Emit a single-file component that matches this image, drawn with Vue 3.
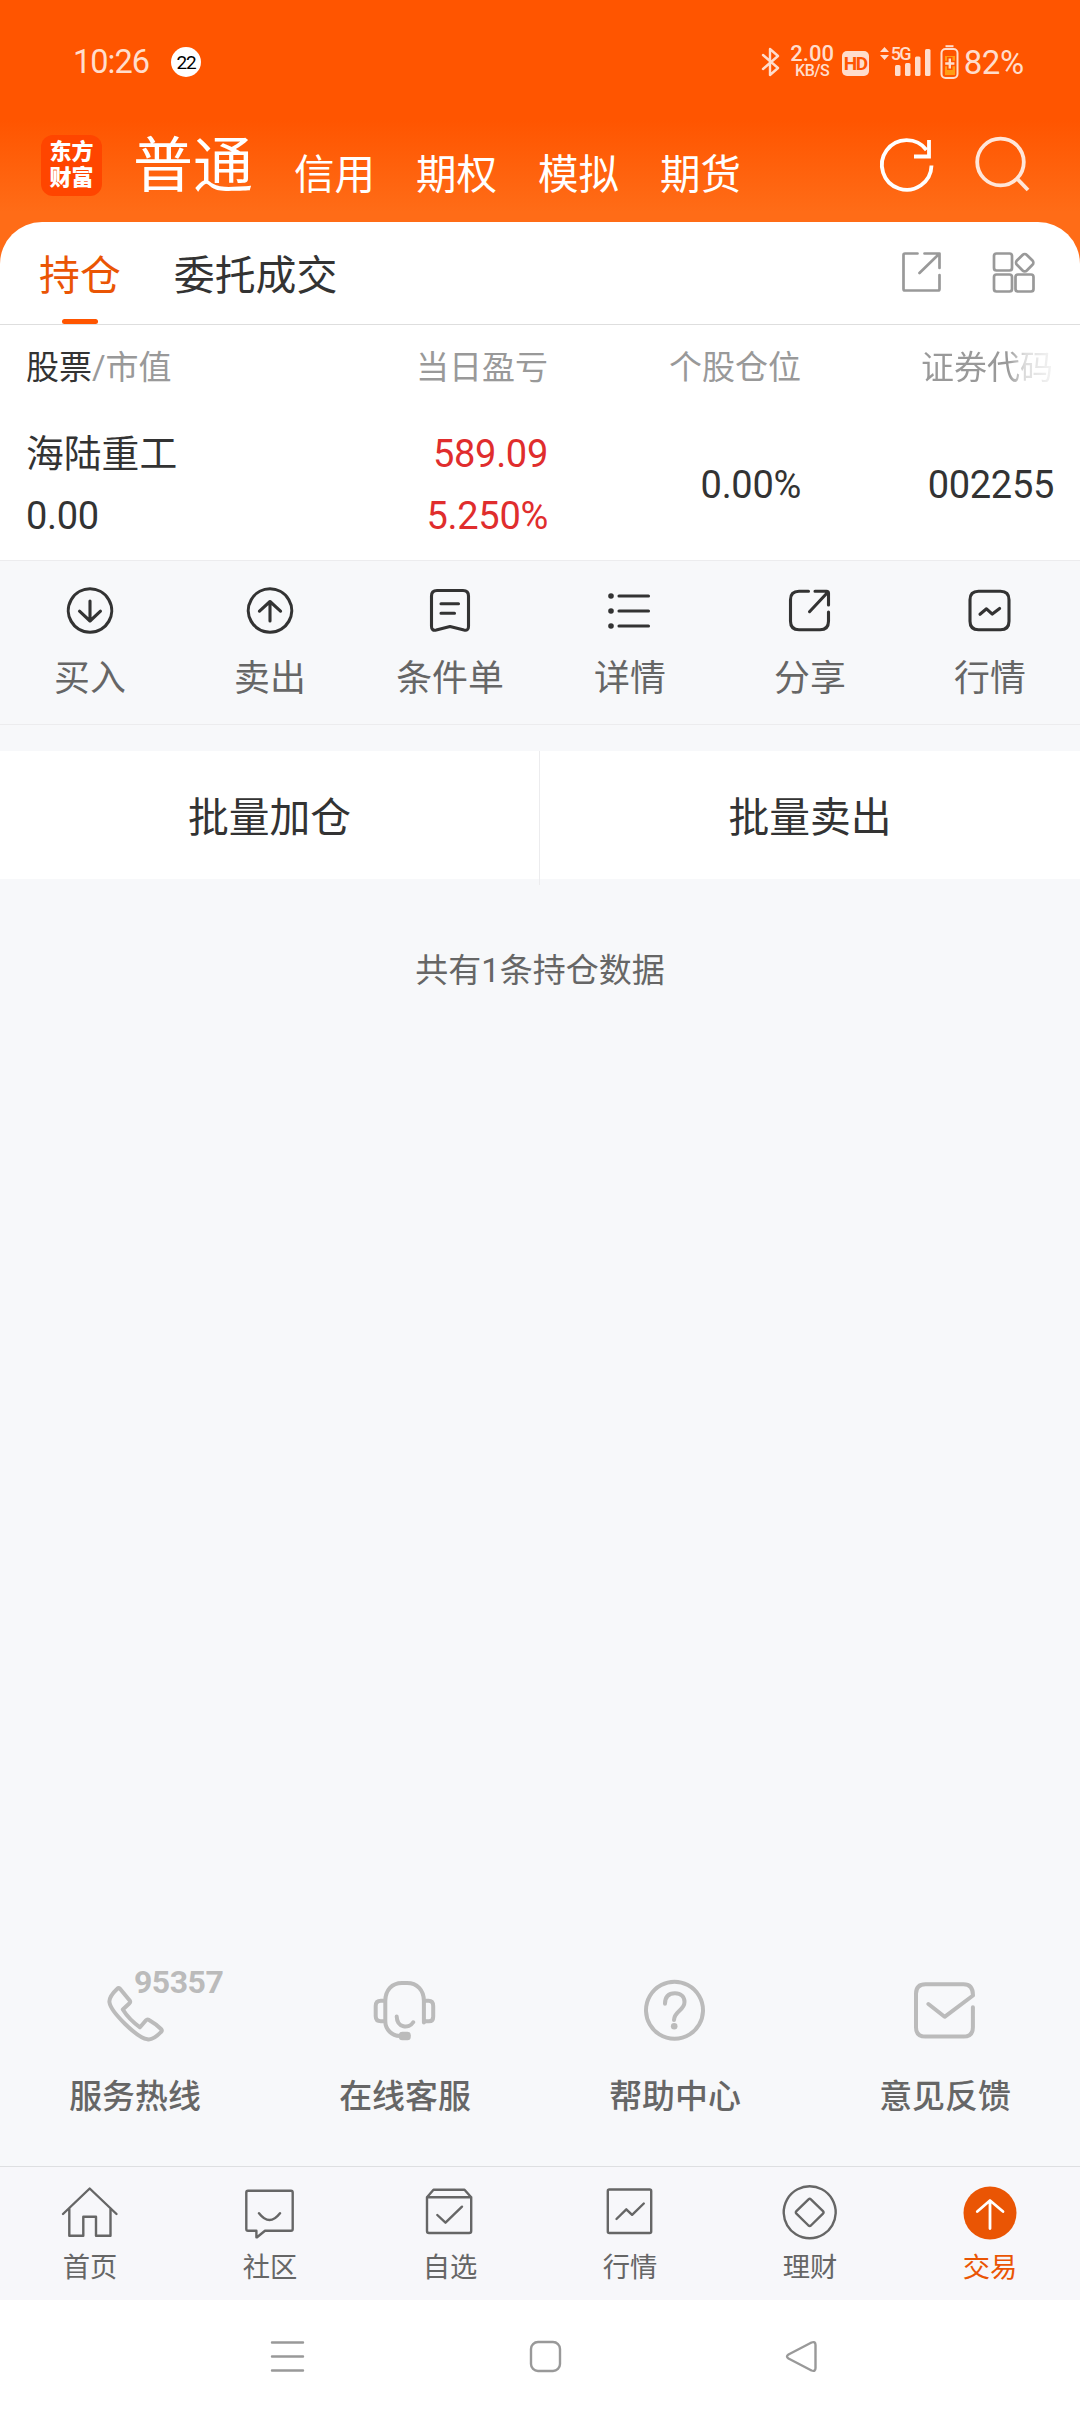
<script setup>
import { ref } from "vue";

const accounts = ["信用", "期权", "模拟", "期货"];

const actions = [
  {
    label: "买入",
    d: "M30 21v20M19.5 31.2L30 41 40.5 31.2M30 8.8a21.7 21.7 0 1 0 .01 0z",
  },
  {
    label: "卖出",
    d: "M30 41V22M19.5 31.2L30 21.5 40.5 31.2M30 8.8a21.7 21.7 0 1 0 .01 0z",
  },
  {
    label: "条件单",
    d: "M17 10.5h26q5.5 0 5.5 5.5v30.5q0 4.5-4.5 3.5L30 46.5 16.3 50q-4.8 1-4.8-3.5V16q0-5.5 5.5-5.5zM21 23.7h17.5M21 33.3h13.5",
  },
  {
    label: "详情",
    d: "M19 16h29.5M19 31h29.5M19 46h29.5",
    dots: [16, 31, 46],
  },
  {
    label: "分享",
    d: "M28.5 11.3H19q-8.5 0-8.5 8.5v21.5q0 8.5 8.5 8.5h21q8.500 0 8.500-8.500V32M35 11.300h11.500q2 0 2 2V25M29.500 31.700L48 12",
  },
  {
    label: "行情",
    d: "M18.500 11.200h22q8.500 0 8.500 8.500v21.500q0 8.500-8.500 8.500h-22q-8.500 0-8.500-8.500V19.700q0-8.500 8.500-8.500zM20 34.300l6.500-5.500 5.800 5.300 7.300-5.600",
  },
];

const services = [
  {
    label: "服务热线",
    tag: "95357",
    d: "M25 18.700L34.700 30.500q1 1.400-.2 2.700L27.800 39.500Q34 49.500 45 57.300L51 50.300q1.300-1.500 3-.3Q61 54 66 59q1.500 1.500 0 3Q58 70.500 52.500 69.300C42 68 16 42 14.500 32.500Q13.500 27 22.300 18.700q1.300-1.300 2.700 0z",
  },
  {
    label: "在线客服",
    d: "M20.300 30.700H16q-5.300 0-5.300 5.300v10.300q0 5 5.300 5h4.300M58.900 51.300h5q4.300 0 4.300-4.600V36q0-5.300-4.800-5.300h-4.500M58.900 52.500V31C58.900 20 52 13 42 13h-5C27 13 20.300 20 20.300 31v20C20.300 60 27 65.500 35 66M31.700 46.500C32 58 44 59 48.200 52.300",
    mic: true,
  },
  {
    label: "帮助中心",
    d: "M39.500 11.800a28.500 28.500 0 1 0 .01 0zM30 33.800C30 26 34 23.300 40 23.300S49.500 27 49.500 32C49.500 40.500 39.300 41 39 50",
    dot: true,
  },
  {
    label: "意见反馈",
    d: "M23.400 34l16.200 12.800L68 25.500Q68 14.300 58.500 14.300h-38q-9.500 0-9.500 9.500v33.500q0 9.300 9.500 9.300h38q9.400 0 9.400-9.300v-20",
  },
];

const tabs = [
  {
    label: "首页",
    d: "M3 34L29.700 8.500 56.500 34M9.300 28.500v27.200h14V36.700H36v19h14.500V28.500",
  },
  {
    label: "社区",
    d: "M8 10.700h43q1.700 0 1.700 1.700V49q0 1.700-1.700 1.700H25l-8 6.500h-.6v-6.500H8q-1.700 0-1.700-1.700V12.400q0-1.700 1.700-1.700zM19 33.300q10.500 13.500 21 0",
  },
  {
    label: "自选",
    d: "M7 17.300h44.200M13.500 9.800h31L51.200 17.300V51q0 2-2 2H9q-2 0-2-2V17.300zM17.300 35l8.200 7.700 16.500-16",
  },
  {
    label: "行情",
    d: "M9.300 9.500h40.400q1.500 0 1.500 1.500v40.500q0 1.500-1.500 1.500H9.300q-1.500 0-1.500-1.500V11q0-1.500 1.500-1.500zM16.500 39L26.300 29.300l5.800 5.500L43.800 23.500",
  },
  {
    label: "理财",
    d: "M29.700 6.300a26 26 0 1 0 .01 0zM28.500 19.300q1.200-1 2.400 0L43 31.200q1.200 1.200 0 2.400L30.900 45.500q-1.200 1-2.400 0L16.400 33.600q-1.200-1.200 0-2.400z",
  },
  { label: "交易", d: "M30 48.500V21M17.300 31.500L30 20.500 43 31.500" },
];

const current = ref(5);
</script>

<template>
  <div class="page">
    <header class="head">
      <div class="status">
        <span class="time">10:26</span>
        <span class="badge">22</span>
        <div class="status__right">
          <svg class="bt" width="20" height="32" viewBox="0 0 20 32">
            <path d="M2 9l15 13-8 7V3l8 7L2 23" />
          </svg>
          <div class="speed">
            <span>2.00</span>
            <span class="unit">KB/S</span>
          </div>
          <span class="hd">HD</span>
          <div class="signal">
            <svg width="52" height="32" viewBox="0 0 52 32">
              <path d="M0 6l4.500-5L9 6zM0 9l4.500 5L9 9z" />
              <rect x="15" y="19" width="5.500" height="11" rx="1.500" />
              <rect x="25" y="17" width="5.500" height="13" rx="1.500" />
              <rect x="35" y="10.500" width="5.500" height="19.500" rx="1.500" />
              <rect x="45" y="3" width="5.500" height="27" rx="1.500" />
            </svg>
            <span class="net">5G</span>
          </div>
          <svg class="battery" width="20" height="34" viewBox="0 0 20 34">
            <path d="M5.500 1.200h8" stroke="#ffddcc" stroke-width="2" />
            <rect x="5" y="11" width="10" height="19" fill="#ff9d14" />
            <rect
              x="1.500"
              y="4"
              width="16"
              height="29"
              rx="4"
              fill="none"
              stroke="#ffddcc"
              stroke-width="2"
            />
            <path d="M9.800 12v13M4.500 18.500h10.600" stroke="#f50" stroke-width="5.500" />
            <path d="M9.800 13.500v10M5.200 18.500h9.200" stroke="#ffddcc" stroke-width="2.400" />
          </svg>
          <span class="percent">82%</span>
        </div>
      </div>
      <div class="nav">
        <div class="logo"><span>东方</span><span>财富</span></div>
        <span class="nav__main">普通</span>
        <span v-for="name in accounts" :key="name" class="nav__item">{{ name }}</span>
        <svg class="nav__icons" width="160" height="70" viewBox="0 0 160 70">
          <path d="M60.500 35.500A24.800 24.800 0 1 1 55.500 20" />
          <path d="M58 10v16.500H43" />
          <g class="search">
            <circle cx="129.500" cy="32" r="23.300" />
            <path d="M146 48.500l11 11.500" />
          </g>
        </svg>
      </div>
    </header>

    <section class="panel">
      <div class="switch">
        <span class="switch__item switch__item--on">持仓</span>
        <span class="switch__item">委托成交</span>
        <svg class="switch__icons" width="140" height="50" viewBox="0 0 140 50">
          <path d="M18.500 9.500H6q-1.500 0-1.500 1.500v34q0 1.500 1.500 1.500h33q1.500 0 1.500-1.500V31" />
          <path d="M25.500 9.500h15V24M20.500 29L40 10" />
          <rect x="95" y="9.500" width="18" height="17" rx="2.500" />
          <rect x="95" y="30.500" width="18" height="17" rx="2.500" />
          <rect x="116.500" y="30.500" width="18" height="17" rx="2.500" />
          <rect x="118.700" y="11.700" width="14" height="14" rx="3" transform="rotate(45 125.700 18.700)" />
        </svg>
      </div>
      <div class="row row--head">
        <span class="name"><b>股票</b>/市值</span>
        <span>当日盈亏</span>
        <span>个股仓位</span>
        <span class="fade">证券代码</span>
      </div>
      <div class="row row--data">
        <div class="pair name">
          <span>海陆重工</span>
          <span class="num">0.00</span>
        </div>
        <div class="pair red num">
          <span>589.09</span>
          <span>5.250%</span>
        </div>
        <span class="num">0.00%</span>
        <span class="num">002255</span>
      </div>
    </section>

    <section class="actions">
      <div v-for="item in actions" :key="item.label" class="actions__item">
        <svg width="60" height="60" viewBox="0 0 60 60">
          <path :d="item.d" />
          <circle v-for="y in item.dots" :key="y" cx="11" :cy="y" r="2.800" />
        </svg>
        <span>{{ item.label }}</span>
      </div>
    </section>

    <section class="batch">
      <div class="batch__btn">批量加仓</div>
      <div class="batch__btn">批量卖出</div>
    </section>

    <p class="total">共有1条持仓数据</p>

    <section class="services">
      <div v-for="item in services" :key="item.label" class="services__item">
        <svg width="80" height="80" viewBox="0 0 80 80">
          <path :d="item.d" />
          <rect v-if="item.mic" class="solid" x="33.800" y="61.700" width="12" height="8.600" rx="3.500" />
          <circle v-if="item.dot" class="solid" cx="39.200" cy="56.300" r="3.300" />
        </svg>
        <span v-if="item.tag" class="tag">{{ item.tag }}</span>
        <span>{{ item.label }}</span>
      </div>
    </section>

    <nav class="tabbar">
      <div
        v-for="(item, i) in tabs"
        :key="item.label"
        class="tabbar__item"
        :class="{ on: current === i }"
        @click="current = i"
      >
        <svg width="60" height="60" viewBox="0 0 60 60">
          <circle v-if="current === i" cx="30" cy="33" r="26.500" />
          <path :d="item.d" />
        </svg>
        <span>{{ item.label }}</span>
      </div>
    </nav>

    <div class="system">
      <svg width="1080" height="112" viewBox="0 0 1080 112">
        <path d="M272 42.500h31M272 56.500h31M272 70.500h31" />
        <rect x="531" y="42" width="29" height="29" rx="7" />
        <path d="M788.500 54.500L811.500 42.500q4-1.500 4 2.500v23q0 4-4 2.500l-23-12q-3-2 0-4z" />
      </svg>
    </div>
  </div>
</template>

<style>
body {
  margin: 0;
}
</style>

<style scoped>
.page {
  width: 1080px;
  height: 2412px;
  display: flex;
  flex-direction: column;
  overflow: hidden;

  font-family: Roboto, "Noto Sans CJK SC", sans-serif;
  color: #333;
  background-color: #f7f8fa;
}

svg {
  display: block;
  flex: none;
  fill: none;
  stroke-linecap: round;
  stroke-linejoin: round;
}

.head {
  height: 272px;
  flex: none;
  background: linear-gradient(#ff5500 120px, #ff6c17 212px);
}

.status {
  height: 124px;
  padding: 0 56px 0 73px;
  box-sizing: border-box;
  display: flex;
  align-items: center;
  color: #ffddcc;
}

.time {
  width: 98px;
  font-size: 32.5px;
  letter-spacing: -1px;
}

.badge {
  width: 30px;
  height: 30px;
  border-radius: 50%;
  font-size: 19px;
  line-height: 31px;
  letter-spacing: -1.2px;
  text-align: center;
  color: #000;
  background-color: #fff;
}

.status__right {
  margin-left: auto;
  display: flex;
  align-items: center;
}

.bt {
  margin-right: 10px;
  stroke: #ffddcc;
  stroke-width: 2.4;
}

.speed {
  width: 43px;
  margin-right: 8px;
  display: flex;
  flex-direction: column;
  align-items: center;
  font-size: 22px;
  line-height: 17px;
  font-weight: 500;
}

.unit {
  font-size: 16px;
  line-height: 18px;
  letter-spacing: -0.5px;
}

.hd {
  width: 27px;
  height: 25px;
  margin: 2px 11px 0 0;
  border-radius: 5px;
  font-size: 19px;
  line-height: 26px;
  font-weight: 700;
  letter-spacing: -1.5px;
  text-align: center;
  color: #ff5500;
  background-color: #ffddcc;
}

.signal {
  position: relative;
  margin-right: 8px;
}

.signal svg {
  fill: #ffddcc;
}

.net {
  position: absolute;
  left: 11px;
  top: -1px;
  font-size: 18px;
  line-height: 18px;
  font-weight: 500;
  letter-spacing: -1.5px;
}

.battery {
  margin-right: 4px;
  stroke-linecap: butt;
}

.percent {
  margin-top: 1px;
  font-size: 33px;
  letter-spacing: -0.3px;
}

.nav {
  height: 82px;
  padding: 0 0 0 41px;
  display: flex;
  align-items: center;
  color: #fff;
}

.logo {
  width: 61px;
  height: 61px;
  margin-right: 31px;
  border-radius: 12px;
  display: flex;
  flex-direction: column;
  align-items: center;
  justify-content: center;
  font-size: 22px;
  line-height: 26px;
  font-weight: 900;
  background-color: #ff4500;
}

.nav__main {
  margin: 4px 41px 0 0;
  font-size: 60px;
  line-height: 80px;
}

.nav__item {
  margin: 19px 41px 0 0;
  font-size: 40.5px;
  line-height: 60px;
}

.nav__icons {
  margin: 0 49px 0 auto;
  stroke: #fff;
  stroke-width: 3.8;
  stroke-linecap: butt;
  stroke-linejoin: miter;
}

.search {
  stroke: #ffe6d9;
}

.panel {
  height: 338px;
  margin-top: -50px;
  flex: none;
  border-radius: 42px 42px 0 0;
  border-bottom: 1px solid #ececee;
  background-color: #fff;
}

.switch {
  height: 102px;
  padding: 0 41px 0 39px;
  display: flex;
  align-items: center;
  border-bottom: 1px solid #dedede;
}

.switch__item {
  height: 102px;
  margin-right: 53px;
  position: relative;
  font-size: 40.9px;
  line-height: 108px;
}

.switch__item--on {
  color: #ea5504;
}

.switch__item--on::after {
  content: "";
  width: 36px;
  height: 5px;
  border-radius: 3px;
  position: absolute;
  left: 23px;
  bottom: 0;
  background-color: #ff5500;
}

.switch__icons {
  margin: 0 0 8px auto;
  stroke: #999;
  stroke-width: 2.7;
}

.row {
  padding: 0 26px;
  display: grid;
  grid-template-columns: 268px 254px 253px 253px;
  align-items: center;
  text-align: right;
}

.row--head {
  height: 86px;
  font-size: 33px;
  line-height: 48px;
  color: #999;
}

.row--head b {
  font-weight: 400;
  color: #333;
}

.row--head .fade {
  margin-right: 1px;
  color: transparent;
  background: linear-gradient(90deg, #999 82%, #ddd 89%, #f4f4f4 100%);
  background-clip: text;
}

.row--data {
  height: 148px;
  font-size: 37.8px;
}

.num {
  font-size: 38px;
  letter-spacing: -0.3px;
}

.row .name {
  text-align: left;
}

.pair {
  display: flex;
  flex-direction: column;
  line-height: 62px;
}

.red {
  color: #e02d2d;
}

.actions {
  height: 163px;
  flex: none;
  display: flex;
  border-bottom: 1px solid #ececee;
}

.actions__item {
  width: 180px;
  padding-top: 19px;
  display: flex;
  flex-direction: column;
  align-items: center;
  font-size: 35.9px;
  line-height: 50px;
  color: #666;
}

.actions__item svg {
  margin-bottom: 14px;
  stroke: #333;
  stroke-width: 3.1;
}

.actions__item circle {
  fill: #333;
  stroke: none;
}

.batch {
  height: 128px;
  margin-top: 26px;
  flex: none;
  display: grid;
  grid-template-columns: 539px 541px;
  background-color: #fff;
}

.batch__btn {
  font-size: 40.8px;
  line-height: 134px;
  text-align: center;
}

.batch__btn + .batch__btn {
  border-left: 1px solid #ececee;
}

.total {
  margin: 67px 0 0;
  font-size: 33px;
  line-height: 50px;
  text-align: center;
  color: #666;
}

.services {
  height: 196px;
  margin-top: auto;
  flex: none;
  display: flex;
}

.services__item {
  width: 270px;
  position: relative;
  display: flex;
  flex-direction: column;
  align-items: center;
  font-size: 32.9px;
  line-height: 50px;
  font-weight: 500;
  color: #666;
}

.services__item svg {
  margin-bottom: 22px;
  stroke: #bbb;
  stroke-width: 4;
}

.services__item .solid {
  fill: #bbb;
  stroke: none;
}

.services__item .tag {
  position: absolute;
  left: 134px;
  top: -5px;
  font-size: 32px;
  line-height: 34px;
  font-weight: 700;
  letter-spacing: -0.5px;
  color: #bbb;
}

.tabbar {
  height: 133px;
  flex: none;
  display: flex;
  border-top: 1px solid #dedfe1;
  background-color: #f7f7fa;
}

.tabbar__item {
  width: 180px;
  padding-top: 13px;
  display: flex;
  flex-direction: column;
  align-items: center;
  font-size: 27.3px;
  line-height: 40px;
  color: #666;
}

.tabbar__item svg {
  margin-bottom: 8px;
  stroke: #666;
  stroke-width: 2.4;
}

.tabbar__item.on {
  color: #ea5504;
}

.tabbar__item.on svg {
  stroke: #fff;
  stroke-width: 2.8;
}

.on circle {
  fill: #ea5504;
  stroke: none;
}

.system {
  height: 112px;
  flex: none;
  background-color: #fff;
}

.system svg {
  stroke: #999;
  stroke-width: 2.4;
}
</style>
